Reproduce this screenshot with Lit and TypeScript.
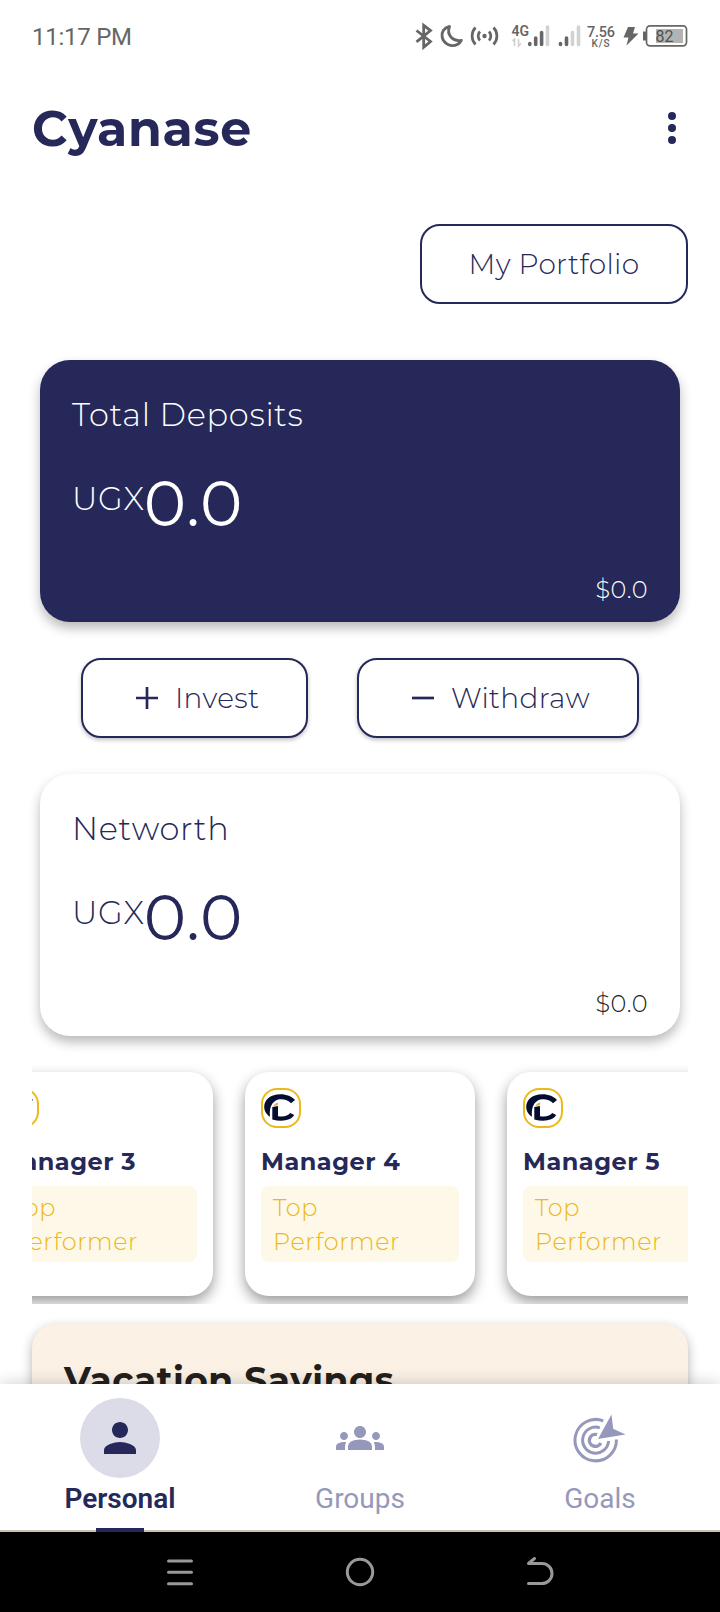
import { LitElement, html, css, svg } from "lit";
import { customElement, property } from "lit/decorators.js";

const NAVY = "#252859";

/* Type scale: each line box is exactly one cap height tall. */
const type = css`
  .t { display: block; white-space: nowrap; font-family: Montserrat, Inter, "Open Sans", sans-serif; font-weight: 340; letter-spacing: 0.5px; }
  .b { font-weight: 700; }
  .t24 { font-size: 24px; line-height: 17px; }
  .t28 { font-size: 28px; line-height: 20px; letter-spacing: 0.35px; }
  .t32 { font-size: 32px; line-height: 22px; letter-spacing: 0.7px; }
  .t36 { font-size: 36px; line-height: 25px; }
  .t48 { font-size: 49px; line-height: 34px; letter-spacing: 0.7px; }
  .t64 { font-size: 64px; line-height: 45px; font-weight: 380; letter-spacing: 0.8px; }
  .tag .t24 { letter-spacing: 0.6px; }
`;

@customElement("status-bar")
class StatusBar extends LitElement {
  static styles = css`
    :host { display: block; height: 72px; color: #666; font-family: Roboto, sans-serif; }
    .row { display: flex; justify-content: space-between; height: 72px; padding-left: 32px; align-items: center; }
    .time { font-size: 24px; line-height: 28px; padding-top: 1px; letter-spacing: -0.25px; }
    svg { display: block; }
  `;
  render() {
    return html`<div class="row"><span class="time">11:17 PM</span>
      <svg width="310" height="72" viewBox="410 0 310 72" fill="none" stroke="#666">
        <path d="M416.500 30.500l14 11-6.800 5.800V25.300l6.800 5.300-14 11.300" stroke-width="2.800" />
        <path d="M449.500 26.500c-5.500 1.500-8.300 5.500-7.300 10.500 1.200 6.800 9 10.800 15.500 7.200 1.600-.9 2.800-2.200 3.600-3.800-8.500 1.500-15-5.500-11.800-13.900z" stroke-width="2.900" stroke-linejoin="round" />
        <circle cx="484.500" cy="36" r="2.200" fill="#666" stroke="none" />
        <path d="M480 31.500a6.500 6.500 0 0 0 0 9M489 31.500a6.500 6.500 0 0 1 0 9M475.500 27.500a12.300 12.300 0 0 0 0 17M493.500 27.500a12.300 12.300 0 0 1 0 17" stroke-width="2.700" />
        <text x="511.500" y="36" font-size="14" font-weight="600" fill="#666" stroke="none">4G</text>
        <path d="M512.500 41l2-2v7M518.500 39v7l2.500-2.500" stroke="#ccc" stroke-width="1.500" />
        <g stroke-width="3.600" stroke-linecap="round">
          <path d="M529.800 43.500v1M535.700 38v6.500M541.600 32.500v12" />
          <path d="M547.500 27v17.500" stroke="#d2d2d2" />
          <path d="M560.500 43.500v1M566.500 38v6.500" />
          <path d="M572.500 32.500v12M578.500 27v17.500" stroke="#d2d2d2" />
        </g>
        <text x="587" y="36.700" font-size="14.500" font-weight="500" fill="#666" stroke="none" textLength="28">7.56</text>
        <text x="591.500" y="47" font-size="10" font-weight="500" fill="#666" stroke="none" textLength="18">K/S</text>
        <path d="M628 27h7l-2 6.500h5.500L626.500 45.500l2-8h-5z" fill="#666" stroke="none" />
        <path d="M644.500 31.500v9" stroke-width="3" />
        <rect x="646.500" y="25.800" width="40" height="20" rx="3.500" stroke-width="1.700" />
        <rect x="656" y="29" width="27" height="14" fill="#b3b3b3" stroke="none" />
        <text x="655.500" y="42" font-size="16" fill="#505050" stroke="none">82</text>
      </svg></div>`;
  }
}

@customElement("balance-card")
class BalanceCard extends LitElement {
  @property() heading = "";
  @property({ type: Boolean, reflect: true }) dark = false;
  static styles = [type, css`
    :host { display: block; box-sizing: border-box; height: 262px; margin: 0 40px; padding: 44px 32px 24px 32px; border-radius: 30px;
      background: #fff; color: #252859; box-shadow: 0 6px 12px rgba(0, 0, 0, .28); display: flex; flex-direction: column; }
    :host([dark]) { background: #252859; color: #fff; }
    .amount { display: flex; margin-top: 55px; align-items: flex-start; }
    .unit { padding: 7px 0 0; margin-right: -1px; }
    .usd { align-self: flex-end; margin-top: auto; color: #222; }
    :host([dark]) .usd { color: #fff; }
  `];
  render() {
    return html`
      <span class="t t32">${this.heading}</span>
      <div class="amount"><span class="t t32 unit">UGX</span><span class="t t64">0.0</span></div>
      <span class="t t24 usd">$0.0</span>`;
  }
}

@customElement("manager-card")
class ManagerCard extends LitElement {
  @property({ type: Number }) index = 1;
  static styles = [type, css`
    :host { display: block; box-sizing: border-box; flex: none; width: 230px; height: 224px; padding: 16px; border-radius: 24px; background: #fff;
      box-shadow: 0 6px 14px rgba(0, 0, 0, .4); }
    .logo { display: block; }
    .name { color: #252859; margin: 25px 0 16px; }
    .tag { height: 76px; box-sizing: border-box; border-radius: 8px; background: #fef8e8; color: #ebb918; padding: 13px 12px; display: grid; gap: 17px; align-content: start; }
  `];
  render() {
    return html`
      <svg class="logo" width="40" height="40" viewBox="0 0 40 40" fill="none">
        <rect x="1" y="1" width="38" height="38" rx="15" stroke="#ebb918" stroke-width="2" />
        <path d="M9 28.700C1 24 .8 11.500 12 7.500 20 4.500 30 6.800 34 12l-4 3.200C26.500 11.500 19.500 10 14.500 12.800 10 15.500 8.300 21 9 28.700z" fill="#030d2f" />
        <path d="M11.300 19l5.700-1v10.200c6 .8 10-.2 12.200-3.100l4 2C30 32.800 20.500 34 11.300 31.500z" fill="#030d2f" />
        <path d="M12.500 18c.8-2 2.300-3 5-3.500l-.8 2.800z" fill="#f3a33c" />
      </svg>
      <span class="t t24 b name">Manager ${this.index}</span>
      <div class="tag"><span class="t t24">Top</span><span class="t t24">Performer</span></div>`;
  }
}

const personIcon = svg`<svg width="48" height="48" viewBox="0 0 24 24" fill="currentColor"><path d="M12 12c2.210 0 4-1.790 4-4s-1.790-4-4-4-4 1.790-4 4 1.790 4 4 4zm0 2c-2.670 0-8 1.340-8 4v2h16v-2c0-2.660-5.330-4-8-4z"/></svg>`;
const groupsIcon = svg`<svg width="48" height="48" viewBox="0 0 24 24" fill="currentColor"><path d="M12 12.750c1.630 0 3.070.39 4.240.9 1.080.48 1.760 1.560 1.760 2.730V18H6v-1.610c0-1.180.68-2.260 1.760-2.730 1.170-.52 2.610-.91 4.240-.91zM4 13c1.100 0 2-.9 2-2s-.9-2-2-2-2 .9-2 2 .9 2 2 2zm1.130 1.100C4.760 14.040 4.390 14 4 14c-.99 0-1.930.21-2.780.58C.48 14.900 0 15.620 0 16.430V18h4.500v-1.610c0-.83.23-1.610.63-2.290zM20 13c1.100 0 2-.9 2-2s-.9-2-2-2-2 .9-2 2 .9 2 2 2zm4 3.430c0-.81-.48-1.530-1.220-1.850-.85-.37-1.790-.58-2.780-.58-.39 0-.76.04-1.130.1.400.68.630 1.460.630 2.290V18H24v-1.570zM12 6c1.660 0 3 1.340 3 3s-1.340 3-3 3-3-1.340-3-3 1.340-3 3-3z"/></svg>`;
const goalIcon = svg`<svg width="56" height="52" viewBox="572 1412 56 52" fill="none" stroke="currentColor" stroke-width="3">
  <path d="M603.300 1420.900A20.700 20.700 0 1 0 616.400 1439.500"/>
  <path d="M599.800 1427.800A13 13 0 1 0 608.600 1441"/>
  <path d="M597 1434.600A6 6 0 1 0 600.800 1443" stroke-width="3.400"/>
  <path d="M598 1439l13.500-24.500 1.700 14.200 12.300 5.800z" fill="currentColor" stroke="none"/></svg>`;

@customElement("tab-bar")
class TabBar extends LitElement {
  static styles = css`
    :host { display: grid; grid-template-columns: repeat(3, 1fr); position: relative; box-sizing: border-box; height: 148px; background: #fff;
      border-bottom: 2px solid #cbc2b2; box-shadow: 0 0 16px rgba(0, 0, 0, .2); font: 400 28px/34px Roboto, sans-serif; color: #9598ba; }
    .tab { display: flex; flex-direction: column; align-items: center; padding-top: 14px; }
    .halo { display: flex; align-items: center; justify-content: center; width: 80px; height: 80px; border-radius: 50%; }
    .label { margin-top: 4px; }
    .on { color: #252859; font-weight: 600; }
    .on .halo { background: #dcdce8; }
    .mark { width: 48px; height: 4px; background: #252859; margin: auto 0 -2px; }
  `;
  render() {
    return html`
      <div class="tab on"><span class="halo">${personIcon}</span><span class="label">Personal</span><span class="mark"></span></div>
      <div class="tab"><span class="halo">${groupsIcon}</span><span class="label">Groups</span></div>
      <div class="tab"><span class="halo">${goalIcon}</span><span class="label">Goals</span></div>`;
  }
}

@customElement("app-root")
class AppRoot extends LitElement {
  static styles = [type, css`
    :host { display: flex; flex-direction: column; width: 720px; height: 1612px; background: #fff; overflow: hidden; }
    .page { flex: 1; min-height: 0; overflow: hidden; color: #252859; }
    .head { display: flex; justify-content: space-between; padding: 40px 42px 0 32px; height: 113px; box-sizing: border-box; }
    .right { display: flex; justify-content: flex-end; padding: 39px 32px 56px; }
    .btn { box-sizing: border-box; height: 80px; border: 2px solid #252859; border-radius: 20px; background: #fff; display: flex; align-items: center; }
    .portfolio { width: 268px; justify-content: center; }
    .actions { display: flex; justify-content: space-between; margin: 36px 81px; }
    .actions .btn { box-shadow: 0 2px 4px rgba(0, 0, 0, .25); gap: 17px; padding-left: 53px; }
    .invest { width: 227px; }
    .withdraw { width: 282px; }
    .strip { display: flex; gap: 32px; margin: 22px 32px 0; padding: 14px 0 8px; overflow: hidden; }
    .strip manager-card:first-child { margin-left: -49px; }
    .goal { box-sizing: border-box; margin: 20px 32px 0; height: 200px; border-radius: 24px; background: #fbf1e5; color: #231f1c; padding: 44px 32px; box-shadow: 0 4px 12px rgba(0, 0, 0, .3); }
    .keys { flex: none; display: flex; height: 80px; background: #000; justify-content: center; }
  `];
  render() {
    return html`
      <status-bar></status-bar>
      <div class="page">
        <div class="head">
          <span class="t t48 b">Cyanase</span>
          <svg width="12" height="32" fill=${NAVY}><circle cx="6" cy="4" r="4"/><circle cx="6" cy="16" r="4"/><circle cx="6" cy="28" r="4"/></svg>
        </div>
        <div class="right"><div class="btn portfolio"><span class="t t28">My Portfolio</span></div></div>
        <balance-card dark heading="Total Deposits"></balance-card>
        <div class="actions">
          <div class="btn invest"><svg width="22" height="22" stroke=${NAVY} stroke-width="2.700"><path d="M0 11h22M11 0v22"/></svg><span class="t t28">Invest</span></div>
          <div class="btn withdraw"><svg width="22" height="22" stroke=${NAVY} stroke-width="2.700"><path d="M0 11h22"/></svg><span class="t t28">Withdraw</span></div>
        </div>
        <balance-card heading="Networth"></balance-card>
        <div class="strip">
          <manager-card index="3"></manager-card><manager-card index="4"></manager-card><manager-card index="5"></manager-card>
        </div>
        <div class="goal"><span class="t t36 b">Vacation Savings</span></div>
      </div>
      <tab-bar></tab-bar>
      <div class="keys">
        <svg width="400" height="80" viewBox="160 0 400 80" fill="none" stroke="#999" stroke-width="3" stroke-linecap="round" stroke-linejoin="round">
          <path d="M168.500 29h23M168.500 40.300h23M168.500 51.700h23"/>
          <circle cx="360" cy="40" r="12.700"/>
          <path d="M534.500 26.500l-6 5h13.500a10 10 0 0 1 0 20h-13.500"/>
        </svg>
      </div>`;
  }
}
